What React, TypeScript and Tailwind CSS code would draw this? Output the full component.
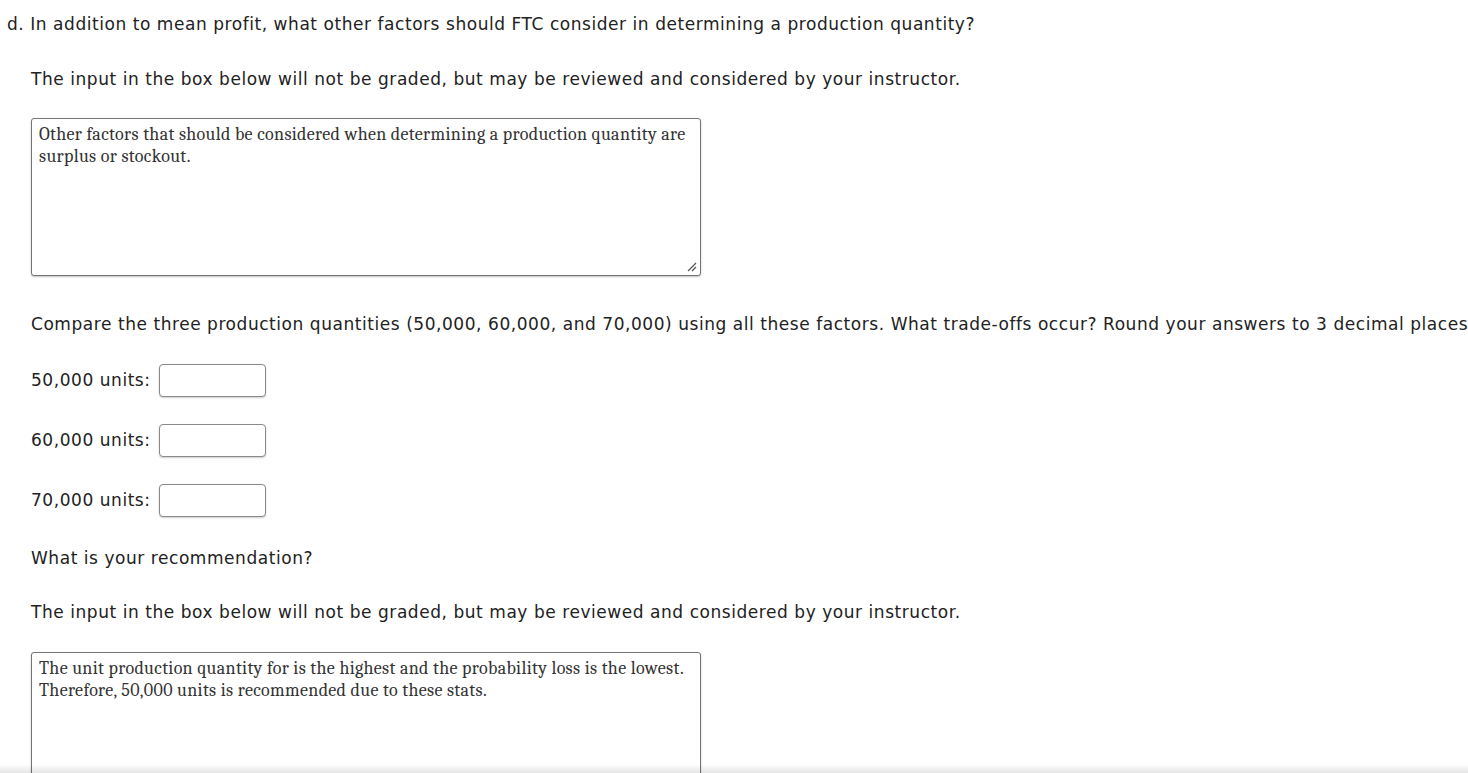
import React from "react";

const sans = "font-['DejaVu_Sans',sans-serif]";
const serif = "font-['Cambria','Liberation_Serif',serif]";

function Box({ text, h }: { text: React.ReactNode; h: string }) {
  return (
    <div
      className={`w-[670px] ${h} rounded-[3px] border border-[#767676] bg-white px-[7px] pt-[5px] text-[18px] leading-[22px] tracking-[0.33px] text-[#333] ${serif} shadow-[0_1px_2px_rgba(0,0,0,0.25)] relative`}
    >
      {text}
      <svg className="absolute right-[3px] bottom-[3px]" width="10" height="10" viewBox="0 0 10 10">
        <path d="M9 1 L1 9 M9 5 L5 9" stroke="#555" strokeWidth="1.2" />
      </svg>
    </div>
  );
}

function UnitRow({ label }: { label: string }) {
  return (
    <div className="flex items-center h-[33px]">
      <span className="mr-[8px]">{label}</span>
      <div className="w-[107px] h-[33px] rounded-[4px] border border-[#8a8a8a] bg-white shadow-[0_1px_2px_rgba(0,0,0,0.2)]" />
    </div>
  );
}

export default function App() {
  return (
    <div className={`relative w-[1468px] h-[773px] overflow-hidden bg-white text-[17px] tracking-[0.55px] text-[#222] ${sans} whitespace-nowrap`}>
      <div className="pl-[7px] pt-[13px] leading-[22px]">
        d. In addition to mean profit, what other factors should FTC consider in determining a production quantity?
      </div>
      <div className="pl-[31px]">
        <div className="mt-[33px] leading-[22px]">
          The input in the box below will not be graded, but may be reviewed and considered by your instructor.
        </div>
        <div className="mt-[28px]">
          <Box
            h="h-[158px]"
            text={
              <>
                Other factors that should be considered when determining a production quantity are
                <br />
                surplus or stockout.
              </>
            }
          />
        </div>
        <div className="mt-[37px] leading-[22px]">
          Compare the three production quantities (50,000, 60,000, and 70,000) using all these factors. What trade-offs occur? Round your answers to 3 decimal places.
        </div>
        <div className="mt-[29px] flex flex-col gap-[27px]">
          <UnitRow label="50,000 units:" />
          <UnitRow label="60,000 units:" />
          <UnitRow label="70,000 units:" />
        </div>
        <div className="mt-[30px] leading-[22px]">What is your recommendation?</div>
        <div className="mt-[32px] leading-[22px]">
          The input in the box below will not be graded, but may be reviewed and considered by your instructor.
        </div>
        <div className="mt-[29px]">
          <Box
            h="h-[158px]"
            text={
              <>
                The unit production quantity for is the highest and the probability loss is the lowest.
                <br />
                Therefore, 50,000 units is recommended due to these stats.
              </>
            }
          />
        </div>
      </div>
      <div className="absolute left-0 right-0 bottom-0 h-[9px] bg-gradient-to-b from-[rgba(0,0,0,0)] to-[rgba(0,0,0,0.1)]" />
    </div>
  );
}
